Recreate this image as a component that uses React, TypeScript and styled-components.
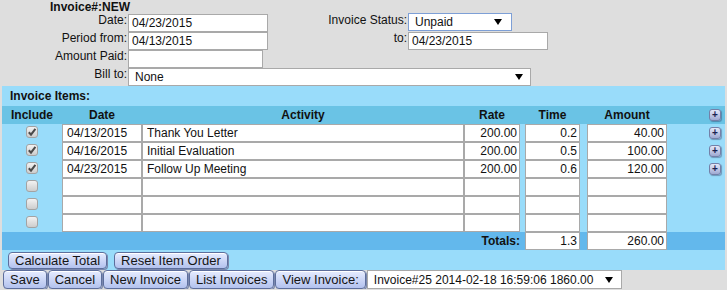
import React from "react";
import styled, { createGlobalStyle } from "styled-components";

const GlobalStyle = createGlobalStyle`
  html, body {
    margin: 0;
    padding: 0;
    background: #dedede;
  }
  body {
    font-family: "Liberation Sans", Arial, sans-serif;
    font-size: 12px;
    color: #111;
  }
  * { box-sizing: border-box; }
`;

interface Item {
  include: boolean;
  date: string;
  activity: string;
  rate: string;
  time: string;
  amount: string;
}

const items: Item[] = [
  { include: true, date: "04/13/2015", activity: "Thank You Letter", rate: "200.00", time: "0.2", amount: "40.00" },
  { include: true, date: "04/16/2015", activity: "Initial Evaluation", rate: "200.00", time: "0.5", amount: "100.00" },
  { include: true, date: "04/23/2015", activity: "Follow Up Meeting", rate: "200.00", time: "0.6", amount: "120.00" },
  { include: false, date: "", activity: "", rate: "", time: "", amount: "" },
  { include: false, date: "", activity: "", rate: "", time: "", amount: "" },
  { include: false, date: "", activity: "", rate: "", time: "", amount: "" },
];

// column widths of the items table (px)
const W = { include: 60, date: 80, activity: 322, rate: 56, time: 55, amount: 80 };

const Arrow = () => (
  <svg width="8" height="6" viewBox="0 0 8 6">
    <polygon points="0,0 8,0 4,6" fill="#000" />
  </svg>
);

const CheckMark = () => (
  <svg width="10" height="10" viewBox="0 0 10 10">
    <path d="M1.8 5.2 L4 7.6 L8.4 1.8" stroke="#4a4a4a" strokeWidth="2" fill="none" />
  </svg>
);

export default function App() {
  return (
    <Page>
      <GlobalStyle />
      <Form>
        <Title>Invoice#:NEW</Title>

        <Label>Date:</Label>
        <TextInput $w={140} defaultValue="04/23/2015" />
        <Label>Invoice Status:</Label>
        <SelectWrap $w={104} $focus>
          <Select defaultValue="Unpaid">
            <option>Unpaid</option>
            <option>Paid</option>
          </Select>
          <ArrowSlot $right={9}>
            <Arrow />
          </ArrowSlot>
        </SelectWrap>

        <Label>Period from:</Label>
        <TextInput $w={140} defaultValue="04/13/2015" />
        <Label>to:</Label>
        <TextInput $w={140} defaultValue="04/23/2015" />

        <Label>Amount Paid:</Label>
        <TextInput $w={135} defaultValue="" />
        <Spacer />

        <Label>Bill to:</Label>
        <BillWrap>
          <SelectWrap $w={403}>
            <Select defaultValue="None">
              <option>None</option>
            </Select>
            <ArrowSlot $right={7}>
              <Arrow />
            </ArrowSlot>
          </SelectWrap>
        </BillWrap>
      </Form>

      <Panel>
        <PanelTitle>Invoice Items:</PanelTitle>

        <HeaderRow>
          <HeadCell $w={W.include}>Include</HeadCell>
          <HeadCell $w={W.date}>Date</HeadCell>
          <HeadCell $w={W.activity}>Activity</HeadCell>
          <HeadCell $w={W.rate}>Rate</HeadCell>
          <HeadCell $w={W.time} $ml={5}>Time</HeadCell>
          <HeadCell $w={W.amount} $ml={7}>Amount</HeadCell>
          <PlusCell>
            <PlusButton>+</PlusButton>
          </PlusCell>
        </HeaderRow>

        {items.map((it, i) => (
          <ItemRow key={i}>
            <IncludeCell>
              <CheckBox>{it.include && <CheckMark />}</CheckBox>
            </IncludeCell>
            <CellInput $w={W.date} defaultValue={it.date} />
            <CellInput $w={W.activity} defaultValue={it.activity} />
            <CellInput $w={W.rate} $num defaultValue={it.rate} />
            <CellInput $w={W.time} $ml={5} $num defaultValue={it.time} />
            <CellInput $w={W.amount} $ml={7} $num defaultValue={it.amount} />
            <PlusCell>{it.include && <PlusButton>+</PlusButton>}</PlusCell>
          </ItemRow>
        ))}

        <TotalsRow>
          <TotalsLabel>Totals:</TotalsLabel>
          <CellInput $w={W.time} $ml={5} $num defaultValue="1.3" />
          <CellInput $w={W.amount} $ml={7} $num defaultValue="260.00" />
        </TotalsRow>

        <PanelActions>
          <Button>Calculate Total</Button>
          <Button>Reset Item Order</Button>
        </PanelActions>
      </Panel>

      <Footer>
        <Button>Save</Button>
        <Button>Cancel</Button>
        <Button>New Invoice</Button>
        <Button>List Invoices</Button>
        <Button>View Invoice:</Button>
        <SelectWrap $w={255} $h={19}>
          <Select defaultValue="25">
            <option value="25">Invoice#25 2014-02-18 16:59:06 1860.00</option>
          </Select>
          <ArrowSlot $right={8}>
            <Arrow />
          </ArrowSlot>
        </SelectWrap>
      </Footer>
    </Page>
  );
}

const Page = styled.div`
  width: 727px;
`;

const Form = styled.div`
  display: grid;
  grid-template-columns: 128px 140px 140px 1fr;
  grid-template-rows: 14px repeat(4, 18px);
  align-items: start;
`;

const Title = styled.div`
  grid-column: 1 / -1;
  padding-left: 50px;
  font-weight: bold;
  line-height: 14px;
`;

const Label = styled.div`
  text-align: right;
  padding-right: 1px;
  line-height: 14px;
  margin-top: -1px;
  white-space: nowrap;
`;

const Spacer = styled.div`
  grid-column: 3 / -1;
`;

const BillWrap = styled.div`
  grid-column: 2 / -1;
`;

const TextInput = styled.input<{ $w: number }>`
  display: block;
  width: ${(p) => p.$w}px;
  height: 18px;
  margin: 0;
  padding: 0 3px;
  border: 1px solid #a9a9a9;
  background: #fff;
  font: 12px "Liberation Sans", Arial, sans-serif;
  color: #111;
  outline: none;
`;

const SelectWrap = styled.div<{ $w: number; $h?: number; $focus?: boolean }>`
  position: relative;
  flex: none;
  width: ${(p) => p.$w}px;
  height: ${(p) => p.$h ?? 18}px;
  margin-top: ${(p) => (p.$focus ? -1 : 0)}px;
  border: 1px solid ${(p) => (p.$focus ? "#7d9fd6" : "#a9a9a9")};
  background: #fff;
`;

const Select = styled.select`
  appearance: none;
  -webkit-appearance: none;
  display: block;
  width: 100%;
  height: 100%;
  margin: 0;
  padding: 0 0 0 6px;
  border: none;
  background: transparent;
  font: 12px "Liberation Sans", Arial, sans-serif;
  color: #111;
  outline: none;
`;

const ArrowSlot = styled.span<{ $right: number }>`
  position: absolute;
  top: 50%;
  right: ${(p) => p.$right}px;
  transform: translateY(-50%);
  display: flex;
  pointer-events: none;
`;

const Panel = styled.section`
  margin: 0 2px;
  background: #99dcfa;
`;

const PanelTitle = styled.div`
  height: 20px;
  line-height: 20px;
  padding-left: 8px;
  font-weight: bold;
`;

const Row = styled.div`
  display: flex;
  align-items: center;
  height: 18px;
`;

const HeaderRow = styled(Row)`
  background: #6ac3e5;
  font-weight: bold;
`;

const ItemRow = styled(Row)``;

const TotalsRow = styled(Row)`
  background: #63b8ec;
`;

const HeadCell = styled.div<{ $w: number; $ml?: number }>`
  flex: none;
  width: ${(p) => p.$w}px;
  margin-left: ${(p) => p.$ml ?? 0}px;
  text-align: center;
  line-height: 18px;
`;

const IncludeCell = styled.div`
  flex: none;
  width: ${W.include}px;
  height: 18px;
  display: flex;
  justify-content: center;
  align-items: flex-start;
  padding-top: 2px;
`;

const CheckBox = styled.span`
  display: flex;
  align-items: center;
  justify-content: center;
  width: 12px;
  height: 12px;
  border: 1px solid #a3a3a3;
  border-radius: 3px;
  background: linear-gradient(#f2f2f2, #cdcdcd);
`;

const CellInput = styled.input<{ $w: number; $ml?: number; $num?: boolean }>`
  flex: none;
  display: block;
  width: ${(p) => p.$w}px;
  height: 18px;
  margin: 0 0 0 ${(p) => p.$ml ?? 0}px;
  padding: 0 2px 0 4px;
  border: 1px solid #a9a9a9;
  background: #fff;
  font: 12px "Liberation Sans", Arial, sans-serif;
  color: #111;
  text-align: ${(p) => (p.$num ? "right" : "left")};
  outline: none;
`;

const PlusCell = styled.div`
  flex: 1;
  display: flex;
  justify-content: flex-end;
  padding-right: 4px;
`;

const PlusButton = styled.button`
  width: 12px;
  height: 12px;
  padding: 0;
  border: 1px solid #7480a8;
  border-radius: 3px;
  background: linear-gradient(#e4e8f8, #9ea9d2);
  box-shadow: 1px 1px 1px rgba(40, 50, 90, 0.4);
  color: #1b2350;
  font: bold 10px/10px "Liberation Sans", Arial, sans-serif;
  cursor: pointer;
`;

const TotalsLabel = styled.div`
  flex: none;
  width: ${W.include + W.date + W.activity + W.rate}px;
  text-align: right;
  font-weight: bold;
  line-height: 18px;
`;

const PanelActions = styled.div`
  display: flex;
  gap: 7px;
  height: 20px;
  padding: 2px 0 0 6px;
  & > button {
    height: 17px;
  }
`;

const Footer = styled.div`
  display: flex;
  align-items: stretch;
  gap: 1px;
  height: 19px;
  padding-left: 3px;
`;

const Button = styled.button`
  height: 19px;
  margin: 0;
  padding: 0 6px;
  border: 1px solid #5d6e9c;
  border-radius: 4px;
  background: linear-gradient(#e6ecff, #b3c2ee);
  box-shadow: inset 0 1px 0 #fff, 1px 1px 0 #7a88ad;
  color: #151515;
  font: 13px "Liberation Sans", Arial, sans-serif;
  white-space: nowrap;
  cursor: pointer;
`;
